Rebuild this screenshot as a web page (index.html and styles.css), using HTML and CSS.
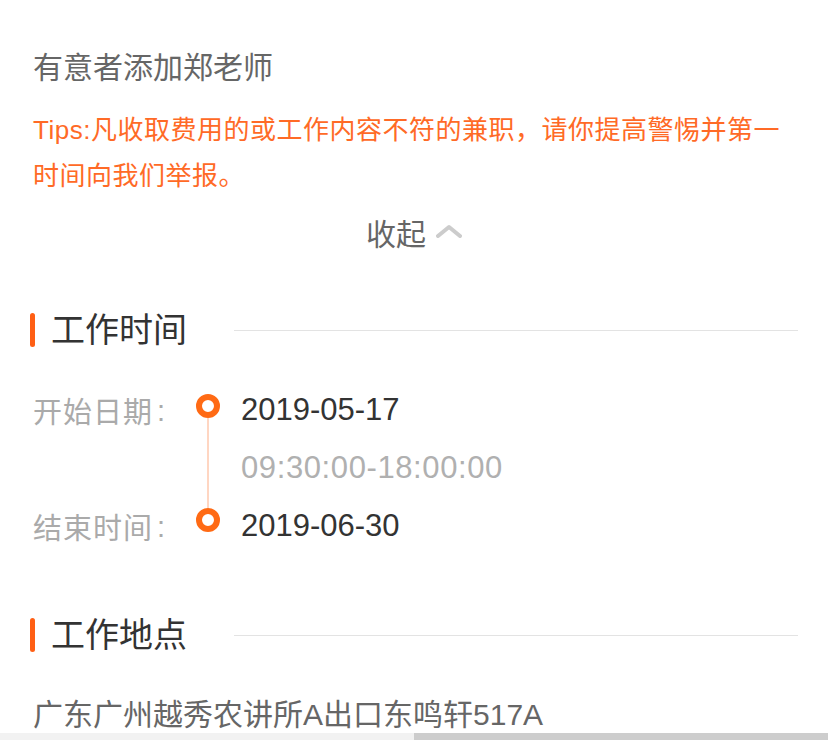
FILE: index.html
```html
<!DOCTYPE html>
<html lang="zh-CN">
<head>
<meta charset="utf-8">
<title>兼职详情</title>
<link rel="stylesheet" href="styles.css">
</head>
<body>
<div class="page">
  <p class="note">有意者添加郑老师</p>
  <p class="tips">Tips:凡收取费用的或工作内容不符的兼职，请你提高警惕并第一时间向我们举报。</p>
  <div class="collapse">
    <span>收起</span>
    <svg class="chev" width="26" height="14" viewBox="0 0 26 14"><polyline points="2,12 13,3 24,12" fill="none" stroke="#cccccc" stroke-width="4" stroke-linecap="round" stroke-linejoin="round"/></svg>
  </div>

  <div class="sec sec-time">
    <span class="bar"></span>
    <h2 class="sec-title">工作时间</h2>
    <span class="rule"></span>
  </div>

  <div class="timeline">
    <div class="lbl r1">开始日期<span class="colon">:</span></div>
    <div class="track">
      <span class="dot"></span>
      <span class="link"></span>
      <span class="dot"></span>
    </div>
    <div class="val r1">2019-05-17</div>
    <div class="val time r2">09:30:00-18:00:00</div>
    <div class="lbl r3">结束时间<span class="colon">:</span></div>
    <div class="val r3">2019-06-30</div>
  </div>

  <div class="sec sec-place">
    <span class="bar"></span>
    <h2 class="sec-title">工作地点</h2>
    <span class="rule"></span>
  </div>

  <p class="addr">广东广州越秀农讲所A出口东鸣轩517A</p>
</div>
<div class="bottom-bar"><span class="half-a"></span><span class="half-b"></span></div>
</body>
</html>
```

FILE: styles.css
```css
html, body {
  margin: 0;
  padding: 0;
  background: #ffffff;
}
body {
  font-family: "Liberation Sans", "Noto Sans CJK SC", sans-serif;
  overflow: hidden;
  height: 740px;
}
.page {
  padding: 45px 30px 0 33px;
}
p, h2 {
  margin: 0;
  font-weight: normal;
}
.note {
  font-size: 30px;
  line-height: 46px;
  color: #666666;
}
.tips {
  margin-top: 16px;
  font-size: 26px;
  line-height: 46px;
  letter-spacing: 0.5px;
  color: #ff6a26;
}
.collapse {
  margin-top: 10px;
  height: 46px;
  display: flex;
  align-items: center;
  justify-content: center;
  gap: 10px;
  font-size: 30px;
  color: #666666;
  margin-left: -3px;
}
.chev {
  display: block;
  margin-top: -2px;
}
.sec {
  display: flex;
  align-items: center;
  height: 46px;
  margin-left: -3px;
}
.sec-time { margin-top: 52px; }
.sec-place { margin-top: 57px; }
.bar {
  width: 5px;
  height: 34px;
  border-radius: 3px;
  background: #ff5f14;
  flex: none;
}
.sec-title {
  margin-left: 16px;
  font-size: 34px;
  line-height: 46px;
  color: #333333;
}
.rule {
  flex: 1;
  height: 1px;
  background: #e3e3e3;
  margin-left: 47px;
}
.timeline {
  margin-top: 28px;
  display: grid;
  grid-template-columns: 163px 24px 1fr;
  grid-template-rows: 58px 58px 58px;
  align-items: center;
}
.r1 { grid-row: 1; }
.r2 { grid-row: 2; }
.r3 { grid-row: 3; }
.lbl {
  grid-column: 1;
  font-size: 29px;
  color: #aaaaaa;
  letter-spacing: 1px;
}
.colon {
  margin-left: 4px;
  position: relative;
  top: -2px;
}
.val {
  grid-column: 3;
  padding-left: 21px;
  font-size: 31px;
  color: #333333;
}
.val.time {
  color: #b0b0b0;
  letter-spacing: 0.6px;
}
.track {
  grid-column: 2;
  grid-row: 1 / 4;
  align-self: stretch;
  display: flex;
  flex-direction: column;
  align-items: center;
  padding: 13px 0 23px;
}
.dot {
  width: 12px;
  height: 12px;
  border: 6px solid #ff6a14;
  border-radius: 50%;
  flex: none;
}
.link {
  flex: 1;
  width: 2px;
  background: #ffd6c2;
}
.addr {
  margin-top: 34px;
  font-size: 30px;
  line-height: 46px;
  color: #666666;
}
.bottom-bar {
  position: fixed;
  left: 0;
  right: 0;
  bottom: 0;
  height: 7px;
  display: flex;
}
.half-a {
  width: 414px;
  background: #f2f2f2;
}
.half-b {
  flex: 1;
  background: #cdcdcd;
}
```
